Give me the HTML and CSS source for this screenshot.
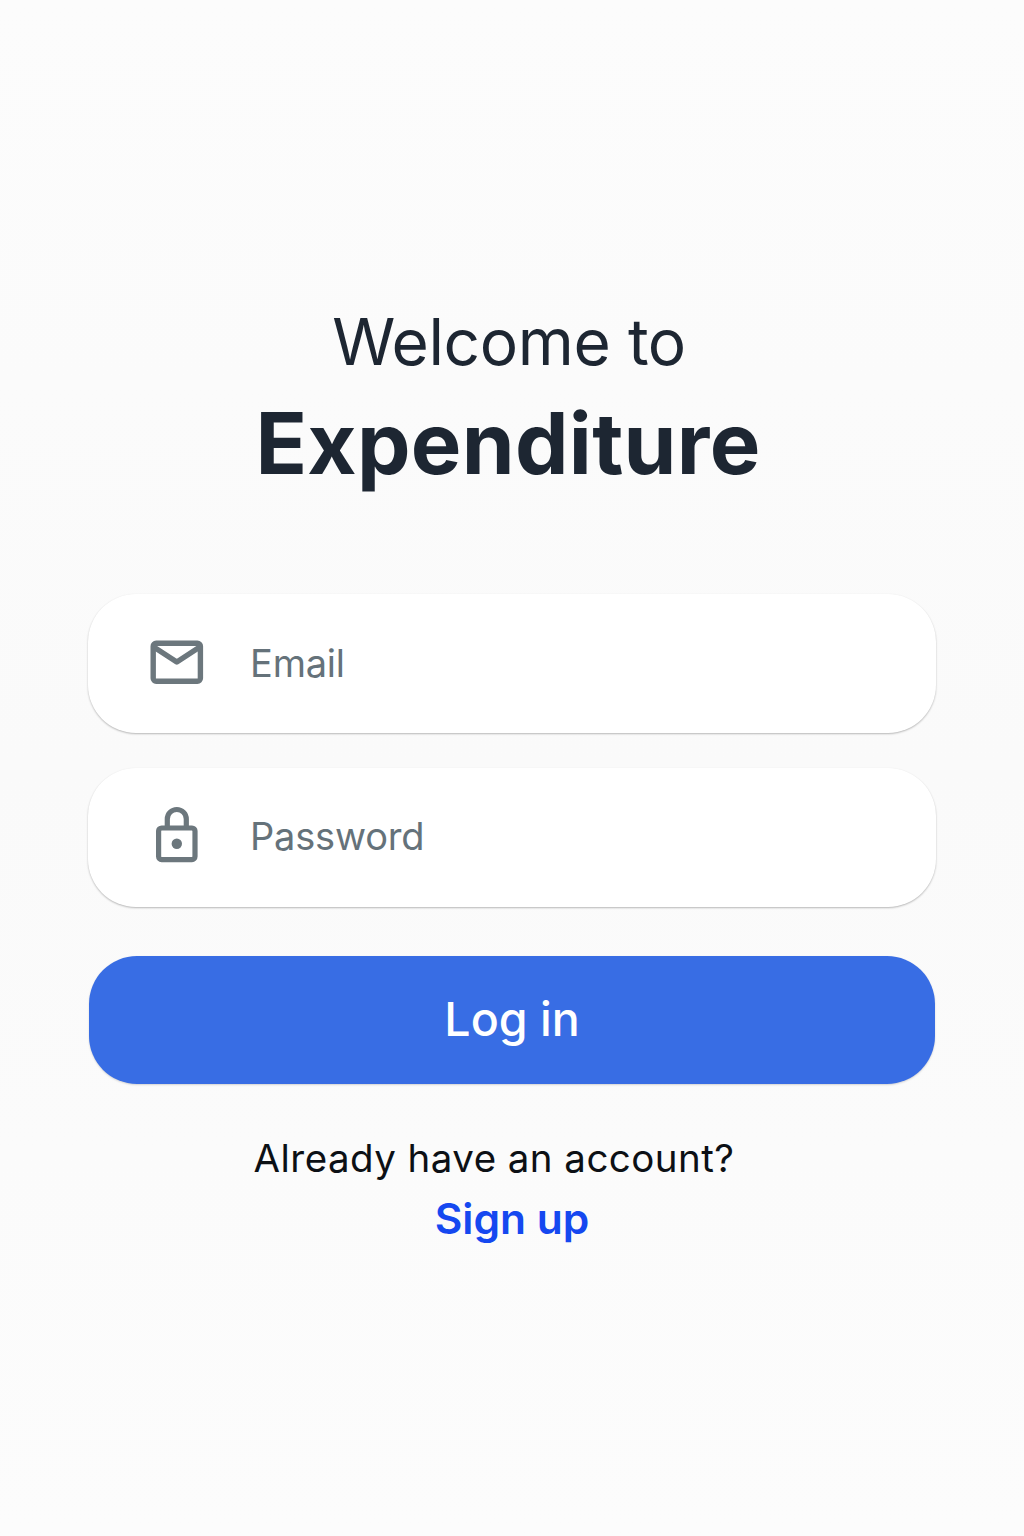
FILE: index.html
```html
<!DOCTYPE html>
<html lang="en">
<head>
<meta charset="utf-8">
<title>Expenditure</title>
<link rel="stylesheet" href="styles.css">
</head>
<body>
<main class="login">
  <h1 class="heading"><span class="welcome">Welcome to</span><span class="brand">Expenditure</span></h1>
  <form class="form">
    <label class="field">
      <svg class="icon" viewBox="0 0 60 60" fill="none" stroke="#6c777d" stroke-width="5.4" stroke-linejoin="round"><rect x="6.2" y="11.2" width="47.2" height="38" rx="3"/><path d="M7.5 15.5l22.3 14.5L52 15.5"/></svg>
      <input class="input" type="email" placeholder="Email">
    </label>
    <label class="field">
      <svg class="icon" viewBox="0 0 60 60" fill="none" stroke="#6c777d" stroke-width="5.2"><rect x="11.6" y="22" width="36.4" height="31.6" rx="3"/><path d="M20.3 22v-9a9.5 9.5 0 0 1 19 0V22"/><circle cx="29.8" cy="37.7" r="5.2" fill="#6c777d" stroke="none"/></svg>
      <input class="input" type="password" placeholder="Password">
    </label>
    <button class="submit" type="button">Log in</button>
  </form>
  <p class="prompt">Already have an account?</p>
  <a class="signup" href="#">Sign up</a>
</main>
</body>
</html>
```
FILE: styles.css
```css
* { box-sizing: border-box; }
body { margin: 0; min-height: 1536px; background: linear-gradient(#fcfcfc, #fafafa 50%, #fcfcfc); font-family: Inter, sans-serif; }
.login { display: flex; flex-direction: column; align-items: center; padding: 302px 88px 0; }
.heading { display: flex; flex-direction: column; align-items: center; margin: 0; color: #1d2632; }
.welcome { font-size: 64px; line-height: 80px; font-weight: 400; letter-spacing: -.4px; margin-right: 6px; }
.brand { font-size: 85px; line-height: 102px; font-weight: 700; letter-spacing: .3px; margin-top: 11px; margin-right: 8px; }
.form { display: flex; flex-direction: column; width: 100%; margin-top: 99px; }
.field { display: flex; align-items: center; gap: 43px; height: 139px; padding: 0 59px 3px; border-radius: 48px; background: #fff; box-shadow: 0 1px 2px rgba(0,0,0,.27); }
.field + .field { margin-top: 35px; }
.icon { width: 60px; height: 60px; flex: none; }
.input { flex: 1; min-width: 0; border: 0; padding: 0; outline: 0; background: none; font: 400 38px/48px Inter, sans-serif; letter-spacing: -.2px; }
.input::placeholder { color: #65727a; opacity: 1; }
.input[type="email"] { padding-top: 1px; }
.submit { height: 128px; margin: 49px 1px 0; border: 0; border-radius: 48px; background: #386de4; color: #fff; font: 500 46.5px/60px Inter, sans-serif; padding: 0 0 2px; box-shadow: 0 1px 2px rgba(0,0,0,.16); }
.prompt { margin: 50px 36px 0 0; font-size: 38.5px; line-height: 48px; letter-spacing: .45px; color: #0c1015; }
.signup { margin-top: 10px; font-size: 42.5px; line-height: 54px; font-weight: 600; color: #1548f0; text-decoration: none; }
```
